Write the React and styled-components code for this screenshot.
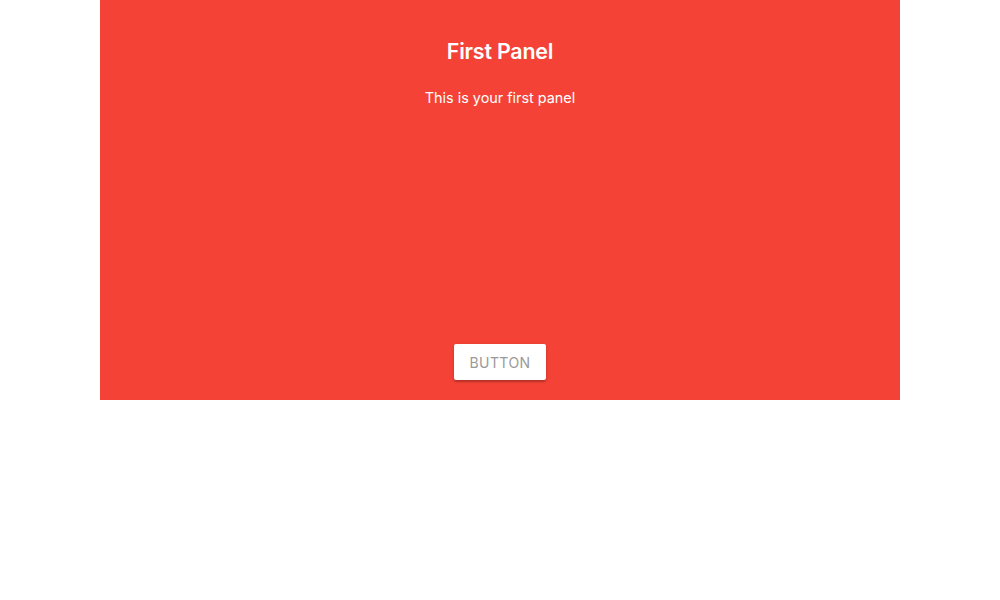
import React from "react";
import styled, { createGlobalStyle } from "styled-components";

const Global = createGlobalStyle`
  html, body { margin: 0; padding: 0; background: #fff; }
  body { font-family: Inter, Roboto, "Liberation Sans", sans-serif; }
`;

const Page = styled.div`
  width: 1000px;
  height: 600px;
  display: flex;
  justify-content: center;
  align-items: flex-start;
`;

const Panel = styled.section`
  width: 800px;
  height: 400px;
  box-sizing: border-box;
  background: #f44336;
  color: #fff;
  display: flex;
  flex-direction: column;
  align-items: center;
  padding: 39px 0 20px;
`;

const Title = styled.h2`
  margin: 0;
  font-size: 21.4px;
  line-height: 24px;
  font-weight: 600;
  letter-spacing: -0.2px;
`;

const Text = styled.p`
  margin: 25px 0 0;
  font-size: 14.4px;
  line-height: 20px;
  font-weight: 400;
`;

const Spacer = styled.div`
  flex: 1;
`;

const Button = styled.button`
  width: 92px;
  height: 36px;
  border: none;
  border-radius: 2px;
  background: #fff;
  color: #999999;
  font-family: Inter, Roboto, "Liberation Sans", sans-serif;
  font-size: 14px;
  letter-spacing: 0.4px;
  text-transform: uppercase;
  box-shadow: 0 2px 2px rgba(0,0,0,0.2), 0 1px 4px rgba(0,0,0,0.12);
  cursor: pointer;
`;

export default function App() {
  return (
    <>
      <Global />
      <Page>
        <Panel>
          <Title>First Panel</Title>
          <Text>This is your first panel</Text>
          <Spacer />
          <Button>Button</Button>
        </Panel>
      </Page>
    </>
  );
}
